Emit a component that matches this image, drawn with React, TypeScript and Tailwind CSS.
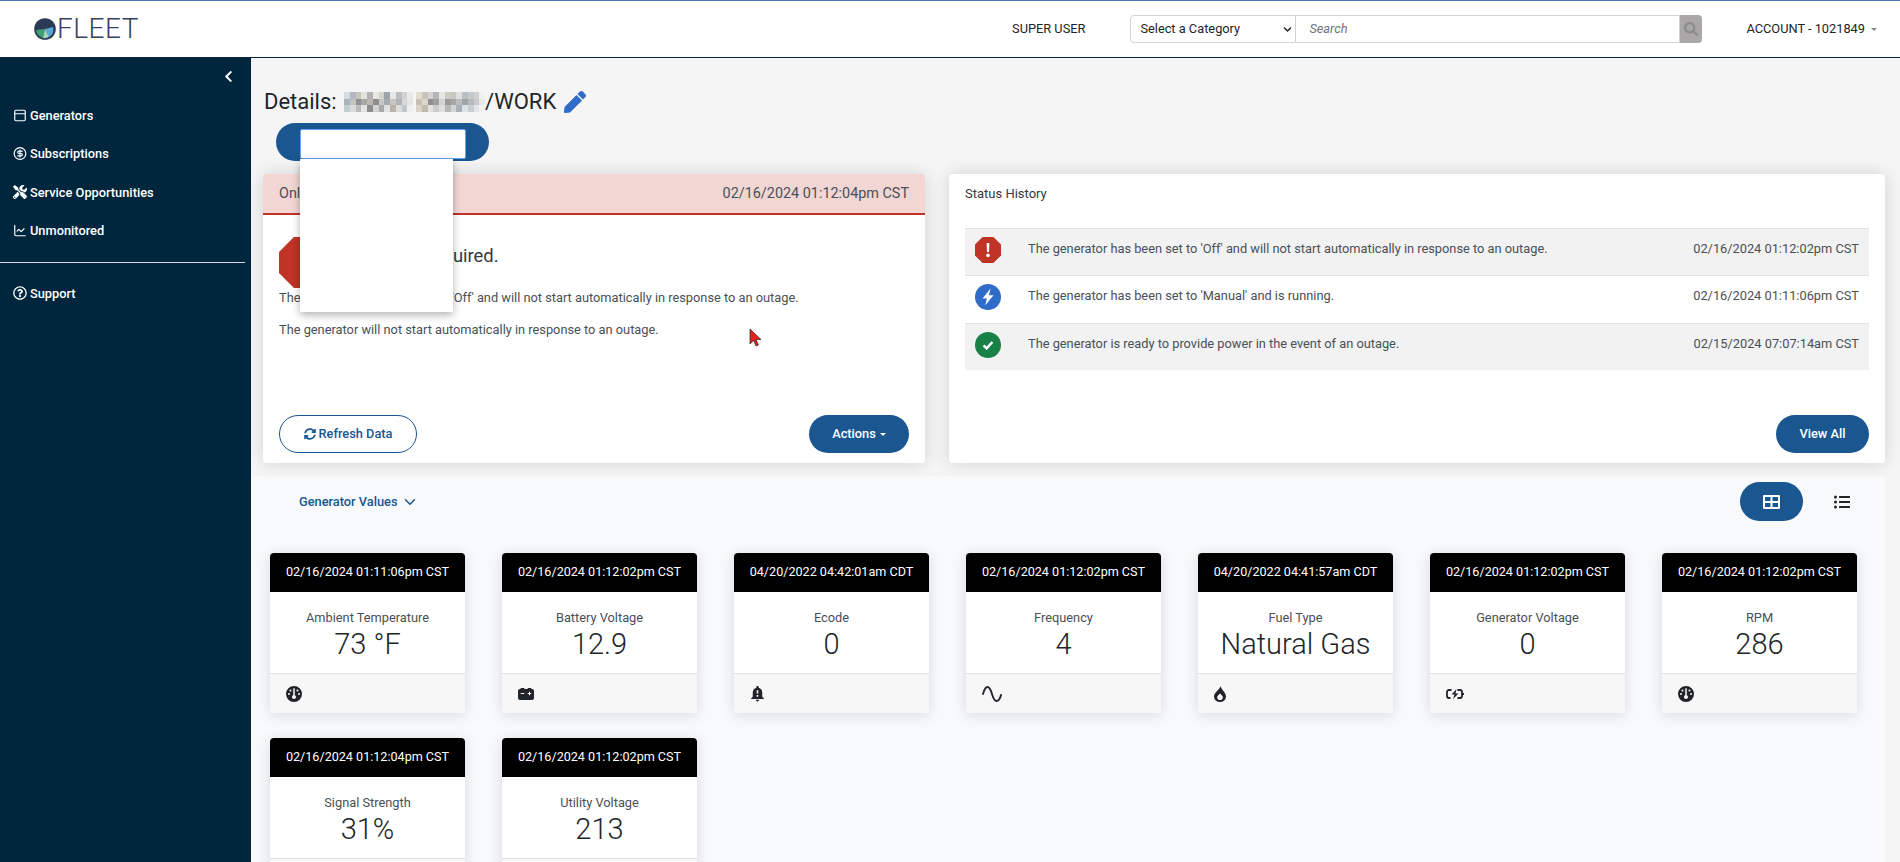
import { ReactNode } from 'react'
import {
  FaChevronDown,
  FaChevronLeft,
  FaListUl,
  FaPen,
  FaRegQuestionCircle,
  FaSearch,
  FaSyncAlt,
  FaTools,
} from 'react-icons/fa'
import { FaCarBattery, FaGauge } from 'react-icons/fa6'
import { LuChartLine, LuChevronDown, LuCircleDollarSign, LuPanelTop } from 'react-icons/lu'
import { MdNotificationImportant } from 'react-icons/md'

const mosaic = [
  '#d5dde3 #aeb9c2 #c9c3ba #e4e2de #b2b2b2 #e6e6e6 #d7d3cd #9ea4aa #e6e8ea #bdbdbd #cfd3d6 #eceae6',
  '#a9b6c1 #c6c2bd #8f9194 #a6a6a6 #bdb8b0 #8d8d8d #c7c7c7 #a5abb0 #c9c4bc #b0b4b8 #d6d8da #e8e6e2',
  '#c3ccd3 #dadad8 #bcbcbc #e4e4e4 #8e8e8e #d2d2d2 #a9a9a9 #e2e2e2 #b8b3ab #dcdcdc #bfc7cd #f0efed',
]

const mosaic2 = [
  '#e2dcd2 #cbc3b6 #d2d2d2 #b5b5b5 #e6e6e6 #cfcac2 #c5c5c5 #e0e0e0 #b8bfc5 #c9c9c9 #d0d0d0 #f0f0f0',
  '#c7bfb1 #dcd6cb #8f8f8f #a0a0a0 #d4d4d4 #9b9b9b #a5a5a5 #bcbcbc #a0a6ab #b9b9b9 #c5cbd0 #e8e8e8',
  '#d9d3c8 #c2baad #e2e2e2 #cbcbcb #dedede #b8b8b8 #d0d5d9 #a8b1b8 #dee3e6 #c8ced3 #e1e5e8 #f2f2f2',
]

function Blur({ rows }: { rows: string[] }) {
  return (
    <svg width="69" height="20" viewBox="0 0 69 20" shapeRendering="crispEdges">
      {rows.map((row, y) =>
        row.split(' ').map((c, x) => (
          <rect key={`${x}-${y}`} x={x * 5.75} y={y * 6.67} width="5.75" height="6.67" fill={c} />
        )),
      )}
    </svg>
  )
}

function Logo() {
  return (
    <svg width="22" height="22" viewBox="0 0 22 22">
      <circle cx="11" cy="11" r="10" fill="#2b3a55" />
      <path d="M2 12 L11 11 L9 20 A9 9 0 0 1 2 12Z" fill="#3f9e72" />
      <path d="M11 11 L19 9 A9 9 0 0 1 15 19Z" fill="#5aa9d6" />
      <path d="M11 11 L15 19 A9 9 0 0 1 9 20Z" fill="#a8d5c0" />
      <circle cx="11" cy="11" r="10" fill="none" stroke="#2b3a55" strokeWidth="1.6" />
    </svg>
  )
}

function NavItem({ icon, label }: { icon: ReactNode; label: string }) {
  return (
    <div className="flex h-[38.5px] items-center gap-[3px] pl-[13px] text-[12.8px] font-medium text-white">
      <span className="flex w-[14px] justify-center">{icon}</span>
      <span>{label}</span>
    </div>
  )
}

function Sidebar() {
  return (
    <aside className="w-[251px] shrink-0 bg-[#00263e]">
      <div className="flex justify-end pt-[12px] pr-[16px] text-white">
        <FaChevronLeft className="size-[13px]" />
      </div>
      <div className="mt-[13px]">
        <NavItem icon={<LuPanelTop className="size-[15px]" />} label="Generators" />
        <NavItem icon={<LuCircleDollarSign className="size-[15px]" />} label="Subscriptions" />
        <NavItem icon={<FaTools className="size-[14px]" />} label="Service Opportunities" />
        <NavItem icon={<LuChartLine className="size-[15px]" />} label="Unmonitored" />
      </div>
      <div className="mt-[12px] mb-[11px] h-px w-[245px] bg-[#d5dbe0]" />
      <NavItem icon={<FaRegQuestionCircle className="size-[14px]" />} label="Support" />
    </aside>
  )
}

function TopBar() {
  return (
    <header className="flex h-[58px] shrink-0 items-center border-t border-b border-t-[#4a7ab5] border-b-[#00263e] bg-white">
      <div className="flex items-center pl-[34px]">
        <Logo />
        <span className="ml-[1px] text-[28px] font-light leading-none tracking-[0.5px] text-[#36415f]">FLEET</span>
      </div>
      <div className="ml-auto flex items-center">
        <span className="text-[12.8px] text-[#212529]">SUPER USER</span>
        <div className="ml-[45px] flex h-[28px] w-[572px] text-[12.8px]">
          <div className="flex w-[166px] items-center justify-between rounded-l border border-[#ced4da] bg-white pr-[3px] pl-[9px] text-[#212529]">
            <span>Select a Category</span>
            <FaChevronDown className="size-[9px]" />
          </div>
          <div className="flex flex-1 items-center border-y border-r border-[#ced4da] bg-white pl-[13px] italic text-[#6c757d]">Search</div>
          <div className="flex w-[22px] items-center justify-center rounded-r bg-[#a9a7a7] text-[#8b8b8b]">
            <FaSearch className="size-[14px]" />
          </div>
        </div>
        <div className="ml-[44px] flex items-center pr-[23px] text-[12.8px] text-[#212529]">
          ACCOUNT - 1021849
          <span className="ml-[6px] border-x-[3px] border-t-[3px] border-x-transparent border-t-[#888]" />
        </div>
      </div>
    </header>
  )
}

function Octagon({ size, children }: { size: number; children?: ReactNode }) {
  return (
    <svg width={size} height={size} viewBox="0 0 26 26" className="shrink-0">
      <path d="M7.6 0H18.4L26 7.6V18.4L18.4 26H7.6L0 18.4V7.6Z" fill="#c03327" />
      {children}
    </svg>
  )
}

function OnlineCard() {
  return (
    <section className="relative flex h-[289px] w-[662px] flex-col rounded bg-white shadow-[0_0_18px_rgba(0,0,0,0.14)]">
      <div className="flex h-[41px] items-center justify-between rounded-t border-b-2 border-[#c03327] bg-[#f2d6d3] px-[16px] text-[14.4px] text-[#495057]">
        <span>Online</span>
        <span>02/16/2024 01:12:04pm CST</span>
      </div>
      <div className="flex flex-1 flex-col px-[16px] pt-[22px] text-[12.8px] text-[#495057]">
        <div className="flex items-start">
          <Octagon size={51} />
          <span className="mt-[5px] ml-[27px] text-[18.4px] leading-[28px] text-[#343a40]">Service Required.</span>
        </div>
        <p className="mt-[0px]">The generator has been set to 'Off' and will not start automatically in response to an outage.</p>
        <p className="mt-[13px]">The generator will not start automatically in response to an outage.</p>
        <div className="mt-auto mb-[10px] flex items-center justify-between">
          <button className="flex h-[38px] w-[138px] items-center justify-center gap-[3px] rounded-full border border-[#1a5690] text-[12.8px] font-medium text-[#1a5690]">
            <FaSyncAlt className="size-[12px]" />
            Refresh Data
          </button>
          <button className="flex h-[38px] w-[100px] items-center justify-center rounded-full bg-[#1a5690] text-[12.8px] font-medium text-white">
            Actions
            <span className="ml-[4px] border-x-[3px] border-t-[3px] border-x-transparent border-t-white" />
          </button>
        </div>
      </div>
    </section>
  )
}

const history = [
  {
    icon: (
      <Octagon size={26}>
        <path d="M11.6 6h2.8l-.4 9h-2zM13 16.6a1.8 1.8 0 1 1 0 3.6 1.8 1.8 0 0 1 0-3.6z" fill="#fff" />
      </Octagon>
    ),
    text: "The generator has been set to 'Off' and will not start automatically in response to an outage.",
    time: '02/16/2024 01:12:02pm CST',
    stripe: true,
  },
  {
    icon: (
      <svg width="26" height="26" viewBox="0 0 26 26">
        <circle cx="13" cy="13" r="13" fill="#2f6bc9" />
        <path d="M15.5 4.5L7.5 14.5h4.4L10.2 21.5 18.5 11.2h-4.6z" fill="#fff" />
      </svg>
    ),
    text: "The generator has been set to 'Manual' and is running.",
    time: '02/16/2024 01:11:06pm CST',
    stripe: false,
  },
  {
    icon: (
      <svg width="26" height="26" viewBox="0 0 26 26">
        <circle cx="13" cy="13" r="13" fill="#198145" />
        <path d="M8.6 13.4l3 3 5.8-6.4" fill="none" stroke="#fff" strokeWidth="2.4" />
      </svg>
    ),
    text: 'The generator is ready to provide power in the event of an outage.',
    time: '02/15/2024 07:07:14am CST',
    stripe: true,
  },
]

function HistoryCard() {
  return (
    <section className="flex h-[289px] w-[936px] flex-col rounded bg-white px-[16px] shadow-[0_0_18px_rgba(0,0,0,0.14)]">
      <h3 className="pt-[10px] text-[13px] leading-[20px] text-[#343a40]">Status History</h3>
      <div className="mt-[24px]">
        {history.map((row) => (
          <div
            key={row.time}
            className={`flex h-[47.3px] border-t border-[#dee2e6] pt-[8px] text-[12.8px] text-[#495057] ${row.stripe ? 'bg-[#f2f2f2]' : 'bg-white'}`}
          >
            <span className="ml-[10px] w-[26px] shrink-0">{row.icon}</span>
            <span className="mt-[2px] ml-[27px] flex-1 leading-[20px]">{row.text}</span>
            <span className="mt-[2px] mr-[10px] leading-[20px]">{row.time}</span>
          </div>
        ))}
      </div>
      <div className="mt-auto mb-[10px] flex justify-end">
        <button className="h-[38px] w-[93px] rounded-full bg-[#1a5690] text-[12.8px] font-medium text-white">View All</button>
      </div>
    </section>
  )
}

const gauge = <FaGauge className="size-[16px]" />

const metrics = [
  { time: '02/16/2024 01:11:06pm CST', label: 'Ambient Temperature', value: '73 °F', icon: gauge },
  { time: '02/16/2024 01:12:02pm CST', label: 'Battery Voltage', value: '12.9', icon: <FaCarBattery className="size-[16px]" /> },
  { time: '04/20/2022 04:42:01am CDT', label: 'Ecode', value: '0', icon: <MdNotificationImportant className="-ml-[2px] size-[19px]" /> },
  {
    time: '02/16/2024 01:12:02pm CST',
    label: 'Frequency',
    value: '4',
    icon: (
      <svg width="20" height="16" viewBox="0 0 20 16" fill="none" stroke="currentColor" strokeWidth="1.9" strokeLinecap="round">
        <path d="M1 8C2.5 2.5 4 1 5.5 1C8 1 9 5 10 8C11 11 12 15 14.5 15C16 15 18 13 19 9" />
      </svg>
    ),
  },
  {
    time: '04/20/2022 04:41:57am CDT',
    label: 'Fuel Type',
    value: 'Natural Gas',
    icon: (
      <svg width="12" height="16" viewBox="0 0 12 16">
        <path
          fill="currentColor"
          fillRule="evenodd"
          d="M6.5 0C7 3.5 12 6.5 12 10.5A6 5.5 0 0 1 0 10.5C0 6.5 5.5 4 6.5 0ZM6 7.5C4.5 9 3.2 10 3.2 11.2A2.8 2.8 0 0 0 8.8 11.2C8.8 10 7.5 9 6 7.5Z"
        />
      </svg>
    ),
  },
  {
    time: '02/16/2024 01:12:02pm CST',
    label: 'Generator Voltage',
    value: '0',
    icon: (
      <svg width="18" height="10" viewBox="0 0 18 10">
        <path d="M5.5 1H3a2 2 0 0 0-2 2v4a2 2 0 0 0 2 2h1.5M11.5 1H14a2 2 0 0 1 2 2v4a2 2 0 0 1-2 2h-2.5M17.4 4v2" fill="none" stroke="currentColor" strokeWidth="1.8" />
        <path d="M10.5 0L5.5 5.5h3L7 10 12.5 4.4H9.5z" fill="currentColor" />
      </svg>
    ),
  },
  { time: '02/16/2024 01:12:02pm CST', label: 'RPM', value: '286', icon: gauge },
  { time: '02/16/2024 01:12:04pm CST', label: 'Signal Strength', value: '31%', icon: gauge },
  { time: '02/16/2024 01:12:02pm CST', label: 'Utility Voltage', value: '213', icon: gauge },
]

function MetricCard({ time, label, value, icon }: (typeof metrics)[number]) {
  return (
    <div className="w-[195px] overflow-hidden rounded bg-white shadow-[0_2px_14px_rgba(0,0,0,0.13)]">
      <div className="flex h-[39px] items-center justify-center bg-black text-[12.6px] text-white">{time}</div>
      <div className="flex h-[81px] flex-col items-center pt-[16px] text-[#343a40]">
        <span className="text-[12.8px] leading-[19px] text-[#495057]">{label}</span>
        <span className="text-[29px] font-light leading-[34px] text-[#212529]">{value}</span>
      </div>
      <div className="flex h-[40px] items-center border-t border-[#dee2e6] bg-[#f7f7f7] pl-[16px] text-[#212529]">{icon}</div>
    </div>
  )
}

export default function App() {
  return (
    <div className="flex h-screen flex-col overflow-hidden bg-[#f5f5f5] font-['Roboto',sans-serif]">
      <TopBar />
      <div className="flex min-h-0 flex-1">
        <Sidebar />
        <main className="relative min-w-0 flex-1">
          <div className="flex items-center pt-[31px] pl-[13px] text-[22px] leading-[26px] text-[#212529]">
            <span>Details:&nbsp;</span>
            <span className="ml-[2px] flex gap-[3px]">
              <Blur rows={mosaic} />
              <Blur rows={mosaic2} />
            </span>
            <span>/WORK</span>
            <FaPen className="ml-[8px] size-[22px] text-[#2f6bc9]" />
          </div>

          <div className="mt-[8px] ml-[25px] flex h-[38px] w-[213px] rounded-full bg-[#1a5690] pt-[6px] pl-[24px]">
            <div className="h-[30px] w-[166px] rounded-[2px] border border-[#63a4ef] bg-white" />
          </div>

          <div className="mt-[13px] flex gap-[24px] pl-[12px]">
            <OnlineCard />
            <HistoryCard />
          </div>

          <div className="mt-[13px] h-[400px] w-[1634px] bg-[#f8f9fb]">
            <div className="flex h-[77px] items-start justify-between pt-[6px] pr-[35px] pl-[48px]">
              <div className="mt-[10px] flex items-center gap-[3px] text-[12.8px] font-medium text-[#1a5690]">
                Generator Values
                <LuChevronDown className="size-[18px]" />
              </div>
              <div className="flex items-center gap-[31px]">
                <div className="flex h-[39px] w-[63px] items-center justify-center rounded-full bg-[#1a5690]">
                  <svg width="17" height="14" viewBox="0 0 17 14">
                    <path d="M1 0h15a1 1 0 0 1 1 1v12a1 1 0 0 1-1 1H1a1 1 0 0 1-1-1V1a1 1 0 0 1 1-1zM2 2v4h5.5V2zm7.5 0v4H15V2zM2 8v4h5.5V8zm7.5 0v4H15V8z" fill="#fff" fillRule="evenodd" />
                  </svg>
                </div>
                <FaListUl className="size-[16px] text-[#212529]" />
              </div>
            </div>
            <div className="flex flex-wrap gap-x-[37px] gap-y-[25px] pl-[19px]">
              {metrics.map((m) => (
                <MetricCard key={m.label} {...m} />
              ))}
            </div>
          </div>

          {/* open select menu, sits over the card */}
          <div className="absolute top-[101px] left-[49px] h-[153px] w-[153px] bg-white shadow-[0_3px_8px_rgba(0,0,0,0.3)]" />

          {/* mouse pointer from the capture */}
          <svg className="absolute top-[270px] left-[498px]" width="13" height="19" viewBox="0 0 13 19">
            <path d="M1 1V16L4.6 12.6L7 18L9.4 17L7 11.6H12Z" fill="#e5231b" stroke="#222" strokeWidth="0.7" />
          </svg>
        </main>
      </div>
    </div>
  )
}
